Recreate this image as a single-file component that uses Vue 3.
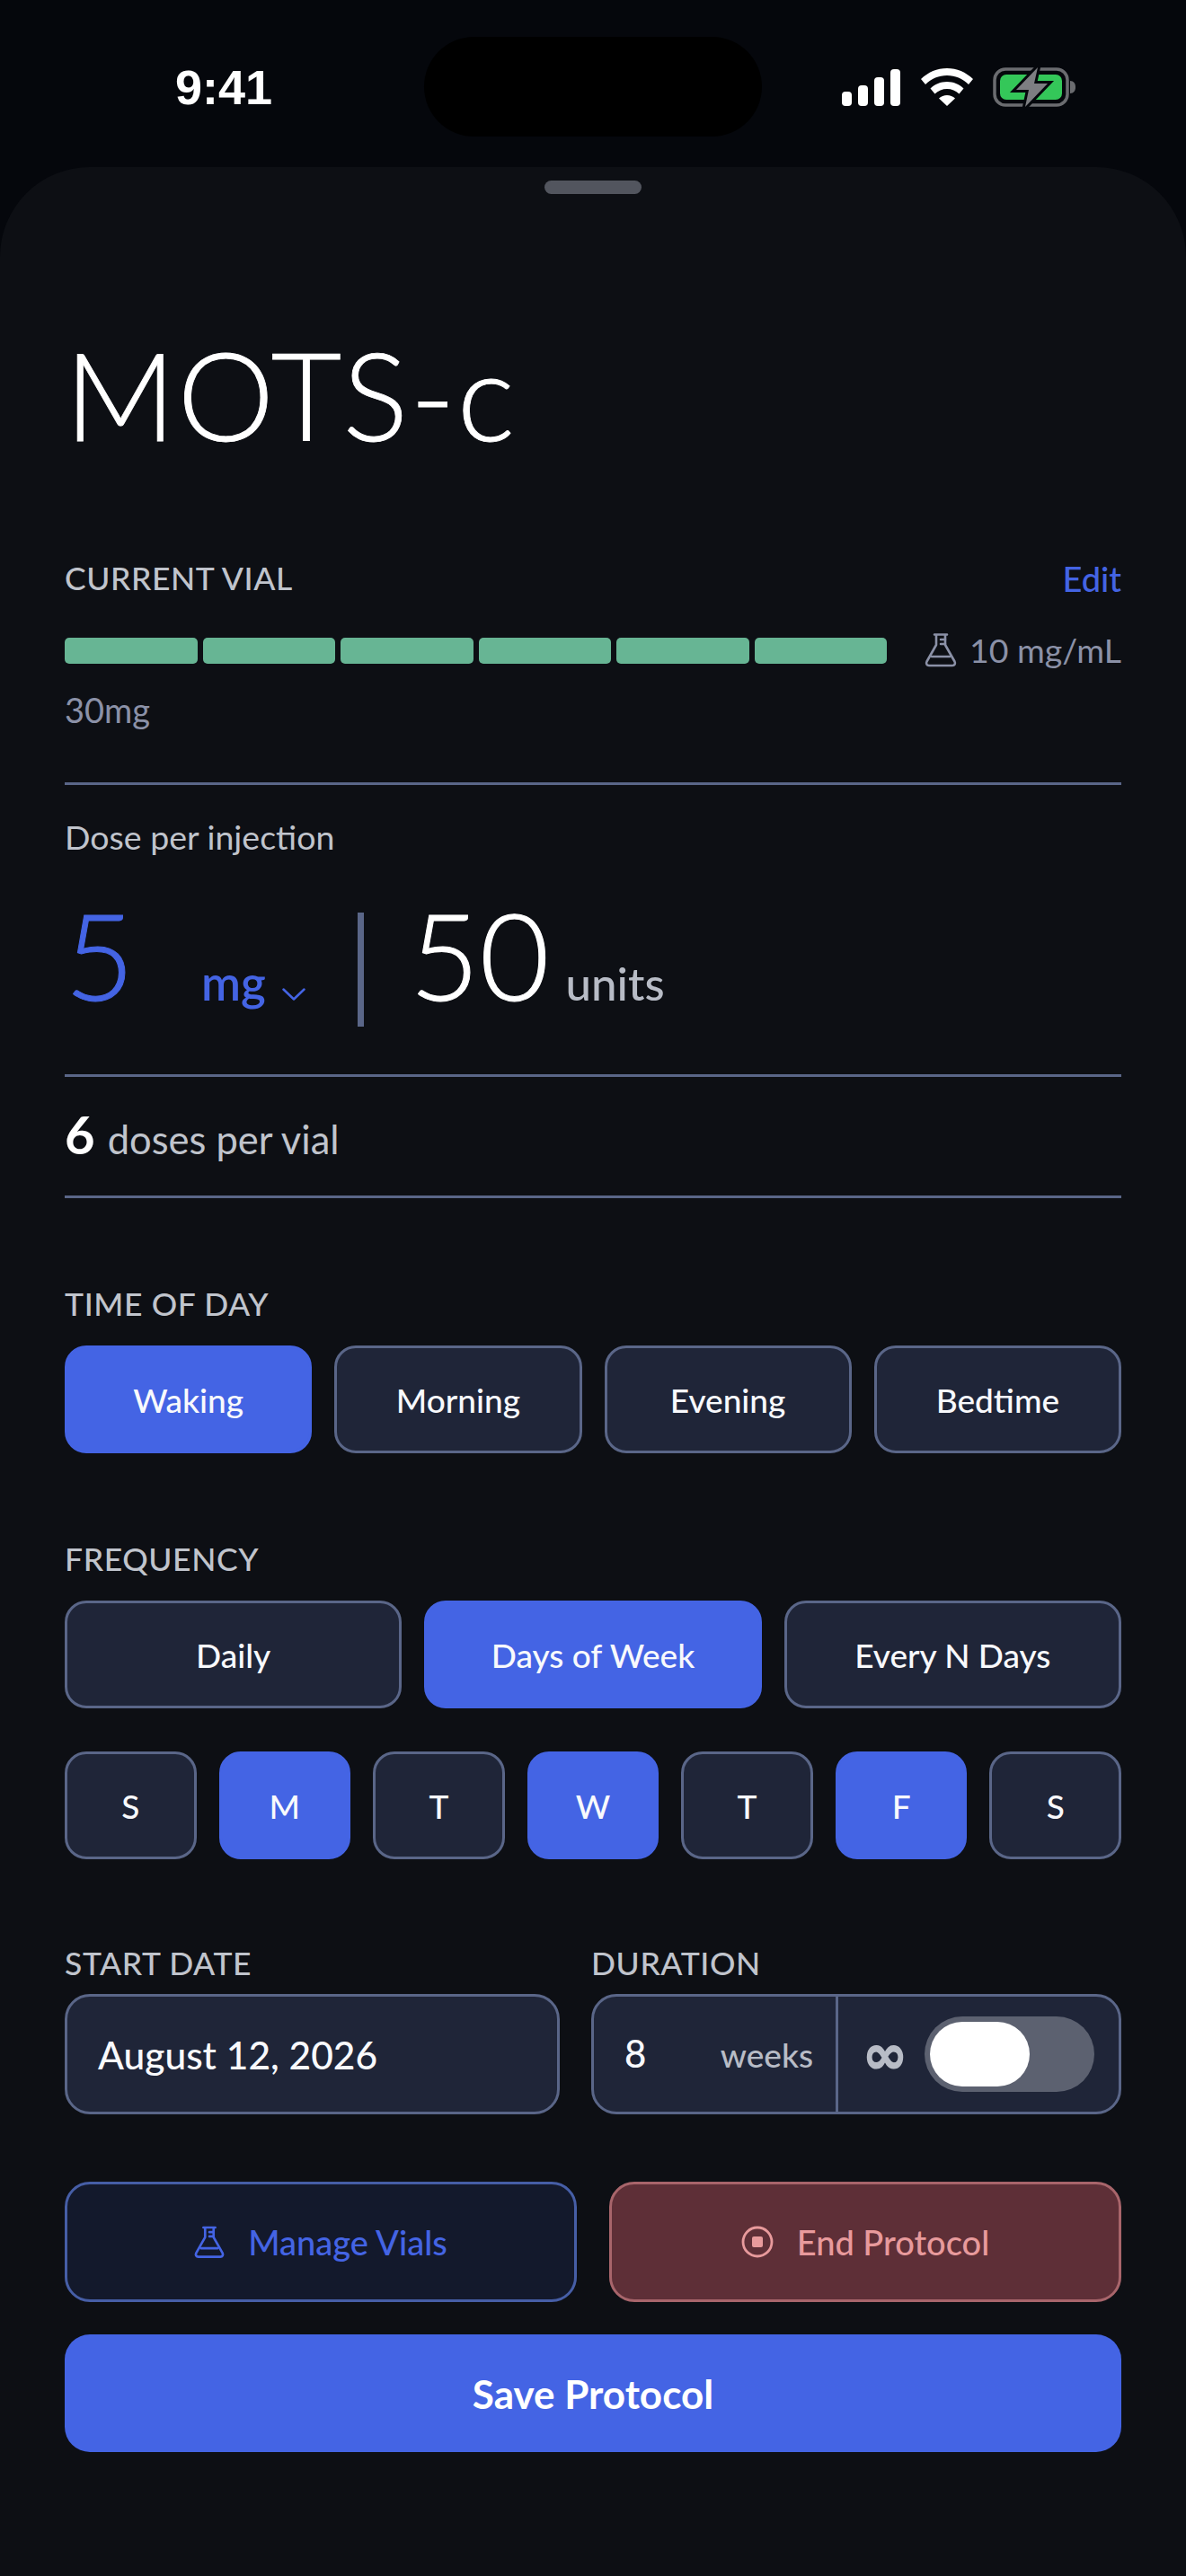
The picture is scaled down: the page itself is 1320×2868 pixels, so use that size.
<template>
  <div class="screen">
    <div class="status">
      <span class="time">9:41</span>
      <div class="island"></div>
      <div class="status-icons">
        <svg width="66" height="41" viewBox="0 0 66 41" fill="#fff">
          <rect x="0" y="25" width="11" height="16" rx="4" />
          <rect x="18" y="18" width="11" height="23" rx="4" />
          <rect x="36" y="9" width="11" height="32" rx="4" />
          <rect x="54" y="0" width="11" height="41" rx="4" />
        </svg>
        <svg width="58" height="42" viewBox="0 0 58 42" fill="#fff">
          <path d="M29 0C18 0 8 4.300 0 12l5 6c6.500-6.500 15-10 24-10s17.500 3.500 24 10l5-6C50 4.300 40 0 29 0z" />
          <path d="M29 15c-7 0-13.500 2.700-18.500 7.500l5 6C19 25 24 23 29 23s10 2 13.500 5.500l5-6C42.500 17.700 36 15 29 15z" />
          <path d="M29 30c-3.500 0-6.500 1.200-9 3.500L29 42l9-8.500c-2.500-2.300-5.500-3.500-9-3.500z" />
        </svg>
        <svg width="94" height="44" viewBox="0 0 94 44">
          <rect x="2" y="2" width="81" height="40" rx="12" fill="none" stroke="#6b6c70" stroke-width="3.500" />
          <rect x="8" y="8" width="69" height="28" rx="7" fill="#34c759" />
          <path d="M86 15c4 0 6 3 6 7s-2 7-6 7z" fill="#6b6c70" />
          <path d="M50 0 L26 25 H40 L36 44 L61 18 H46 Z" fill="#7d7e82" stroke="#05070c" stroke-width="6" paint-order="stroke" />
        </svg>
      </div>
    </div>

    <div class="sheet">
      <div class="handle"></div>
      <h1 class="title">MOTS-c</h1>

      <div class="row-between">
        <span class="label">CURRENT VIAL</span>
        <span class="edit">Edit</span>
      </div>
      <div class="vial-row">
        <div class="segments">
          <div v-for="n in 6" :key="n" class="segment"></div>
        </div>
        <div class="conc">
          <svg class="flask" width="36" height="38" viewBox="0 0 36 38" fill="none" stroke="currentColor" stroke-width="2.600" stroke-linecap="round" stroke-linejoin="round">
            <path d="M11 1.500h14M13 1.500V13L2.500 31.500c-1.200 2.300 0 4.500 2.500 4.500h26c2.500 0 3.700-2.200 2.500-4.500L23 13V1.500" />
            <path d="M8 26h20M18 7h5M18 12h5" />
          </svg>
          <span>10 mg/mL</span>
        </div>
      </div>
      <div class="total">30mg</div>
      <div class="rule rule-vial"></div>

      <div class="dose-label">Dose per injection</div>
      <div class="dose-row">
        <span class="big blue five">5</span>
        <span class="unit-select">mg
          <svg width="26" height="14" viewBox="0 0 26 14" fill="none" stroke="#4464e4" stroke-width="2.500" stroke-linecap="round" stroke-linejoin="round"><path d="M1.500 1.500 13 12.500 24.500 1.500" /></svg>
        </span>
        <div class="vbar"></div>
        <span class="big">50</span>
        <span class="units">units</span>
      </div>
      <div class="rule rule-dose"></div>
      <div class="per-vial"><b>6</b> doses per vial</div>
      <div class="rule"></div>

      <div class="label section-time">TIME OF DAY</div>
      <div class="pills four">
        <button v-for="t in times" :key="t" class="pill" :class="{ active: t === 'Waking' }">{{ t }}</button>
      </div>

      <div class="label section-freq">FREQUENCY</div>
      <div class="pills three">
        <button v-for="f in freqs" :key="f" class="pill" :class="{ active: f === 'Days of Week' }">{{ f }}</button>
      </div>
      <div class="pills seven">
        <button v-for="(d, i) in days" :key="i" class="pill day" :class="{ active: i === 1 || i === 3 || i === 5 }">{{ d }}</button>
      </div>

      <div class="date-grid">
        <div>
          <div class="label field-label">START DATE</div>
          <div class="field date">August 12, 2026</div>
        </div>
        <div>
          <div class="label field-label">DURATION</div>
          <div class="field duration">
            <div class="weeks"><span class="num">8</span><span class="wk">weeks</span></div>
            <div class="forever">
              <span class="inf">∞</span>
              <div class="toggle"><div class="knob"></div></div>
            </div>
          </div>
        </div>
      </div>

      <div class="actions">
        <button class="action manage">
          <svg width="34" height="37" viewBox="0 0 36 38" fill="none" stroke="currentColor" stroke-width="2.800" stroke-linecap="round" stroke-linejoin="round">
            <path d="M11 1.500h14M13 1.500V13L2.500 31.500c-1.200 2.300 0 4.500 2.500 4.500h26c2.500 0 3.700-2.200 2.500-4.500L23 13V1.500" />
            <path d="M8 26h20M18 7h5M18 12h5" />
          </svg>
          Manage Vials
        </button>
        <button class="action end">
          <svg width="36" height="36" viewBox="0 0 36 36" fill="none">
            <circle cx="18" cy="18" r="16" stroke="currentColor" stroke-width="2.800" />
            <rect x="12" y="12" width="12" height="12" rx="2" fill="currentColor" />
          </svg>
          End Protocol
        </button>
      </div>
      <button class="save">Save Protocol</button>
    </div>
  </div>
</template>

<script setup>
const times = ['Waking', 'Morning', 'Evening', 'Bedtime']
const freqs = ['Daily', 'Days of Week', 'Every N Days']
const days = ['S', 'M', 'T', 'W', 'T', 'F', 'S']
</script>

<style>
html,
body {
  background: #05070c;
}
</style>

<style scoped>
.screen {
  width: 1320px;
  height: 2868px;
  background: #05070c;
  font-family: Lato, "Open Sans", sans-serif;
  color: #f8f9fc;
  overflow: hidden;
}

.status {
  position: relative;
  height: 186px;
  box-sizing: border-box;
  padding: 0 121px 0 195px;
  display: flex;
  justify-content: space-between;
  align-items: flex-start;
}

.time {
  margin-top: 65px;
  font-family: "Liberation Sans", sans-serif;
  font-size: 54px;
  font-weight: 700;
  line-height: 64px;
  color: #fff;
}

.island {
  position: absolute;
  left: 472px;
  top: 41px;
  width: 376px;
  height: 111px;
  border-radius: 56px;
  background: #000;
}

.status-icons {
  margin-top: 75px;
  display: flex;
  align-items: center;
  gap: 22px;
}

.sheet {
  position: relative;
  height: 2682px;
  box-sizing: border-box;
  padding: 0 72px;
  background: #0d0f14;
  border-radius: 100px 100px 0 0;
}

.handle {
  position: absolute;
  left: 606px;
  top: 15px;
  width: 108px;
  height: 15px;
  border-radius: 8px;
  background: #52555e;
}

.title {
  margin: 0;
  padding-top: 173px;
  font-size: 136px;
  font-weight: 300;
  line-height: 160px;
  color: #fff;
  letter-spacing: 2px;
  -webkit-text-stroke: 0.800px #fff;
}

.label {
  font-size: 35.500px;
  font-weight: 500;
  line-height: 40px;
  letter-spacing: 0.6px;
  color: #c0c4cc;
}

.row-between {
  margin-top: 105px;
  display: flex;
  justify-content: space-between;
  align-items: center;
}

.edit {
  font-size: 38px;
  font-weight: 500;
  line-height: 40px;
  color: #4464e4;
}

.vial-row {
  margin-top: 39px;
  display: flex;
  align-items: center;
  justify-content: space-between;
  height: 42px;
}

.segments {
  display: flex;
  gap: 6px;
}

.segment {
  width: 147.500px;
  height: 29px;
  border-radius: 5px;
  background: #67b594;
}

.conc {
  display: flex;
  align-items: center;
  gap: 14px;
  font-size: 37.500px;
  line-height: 40px;
  color: #8b91a7;
}

.total {
  margin-top: 25px;
  font-size: 38px;
  line-height: 40px;
  color: #8b91a7;
}

.rule {
  height: 3px;
  background: #5a6688;
}

.rule-vial {
  margin-top: 61px;
}

.dose-label {
  margin-top: 38px;
  font-size: 37.500px;
  line-height: 40px;
  color: #c0c4cc;
}

.dose-row {
  margin-top: 46px;
  height: 130px;
  display: flex;
  align-items: baseline;
}

.big {
  font-size: 134px;
  font-weight: 300;
  line-height: 130px;
  color: #fff;
  -webkit-text-stroke: 1px currentColor;
}

.blue {
  color: #4464e4;
}

.five {
  width: 152px;
}

.unit-select {
  display: inline-flex;
  align-items: baseline;
  gap: 18px;
  font-size: 53px;
  font-weight: 600;
  color: #4464e4;
  width: 174px;
}

.vbar {
  align-self: flex-start;
  width: 7px;
  height: 127px;
  margin-top: 18px;
  background: #5a6688;
  margin-right: 51px;
}

.units {
  margin-left: 18px;
  font-size: 51px;
  font-weight: 500;
  color: #b8bcc6;
}

.rule-dose {
  margin-top: 68px;
}

.per-vial {
  height: 132px;
  display: flex;
  align-items: baseline;
  gap: 14px;
  padding-top: 29px;
  box-sizing: border-box;
  font-size: 43.500px;
  color: #c0c4cc;
}

.per-vial b {
  font-size: 58px;
  font-weight: 700;
  color: #fff;
}

.section-time {
  margin-top: 98px;
}

.section-freq {
  margin-top: 98px;
}

.pills {
  margin-top: 26px;
  display: grid;
  gap: 25px;
}

.four {
  grid-template-columns: repeat(4, 1fr);
}

.three {
  grid-template-columns: repeat(3, 1fr);
}

.seven {
  margin-top: 48px;
  grid-template-columns: repeat(7, 1fr);
}

.pill {
  height: 120px;
  box-sizing: border-box;
  border: 3px solid #5a6688;
  border-radius: 24px;
  background: #1f2538;
  color: #f8f9fc;
  font-family: inherit;
  font-size: 37px;
  font-weight: 500;
}

.pill.active {
  background: #4464e4;
  border-color: #4464e4;
}

.date-grid {
  margin-top: 96px;
  display: grid;
  grid-template-columns: 551px 590px;
  column-gap: 35px;
}

.field-label {
  margin-bottom: 14px;
}

.field {
  height: 134px;
  box-sizing: border-box;
  border: 3px solid #5a6688;
  border-radius: 28px;
  background: #1f2538;
  display: flex;
  align-items: center;
}

.date {
  padding-left: 34px;
  font-size: 42.500px;
  font-weight: 500;
}

.weeks {
  width: 272px;
  height: 100%;
  box-sizing: border-box;
  padding: 0 25px 0 34px;
  display: flex;
  align-items: baseline;
  justify-content: space-between;
  line-height: 126px;
  border-right: 3px solid #5a6688;
}

.num {
  font-size: 42px;
  font-weight: 500;
}

.wk {
  font-size: 37px;
  font-weight: 500;
  color: #b8bcc6;
}

.forever {
  flex: 1;
  display: flex;
  align-items: center;
  padding: 0 27px;
  justify-content: space-between;
}

.inf {
  font-family: "DejaVu Sans", sans-serif;
  font-size: 60px;
  font-weight: 700;
  color: #b8bcc6;
  -webkit-text-stroke: 1.500px #b8bcc6;
}

.toggle {
  width: 189px;
  height: 84px;
  box-sizing: border-box;
  padding: 6px;
  border-radius: 42px;
  background: #5c6170;
}

.knob {
  width: 111px;
  height: 72px;
  border-radius: 36px;
  background: #fff;
}

.actions {
  margin-top: 75px;
  display: grid;
  grid-template-columns: 1fr 1fr;
  gap: 36px;
}

.action {
  height: 134px;
  box-sizing: border-box;
  border-radius: 28px;
  border: 3px solid;
  font-family: inherit;
  font-size: 38px;
  font-weight: 500;
  display: flex;
  align-items: center;
  justify-content: center;
  gap: 26px;
}

.manage {
  background: #13192c;
  border-color: #465ea6;
  color: #4464e4;
}

.end {
  background: #5e2f37;
  border-color: #a8656b;
  color: #e89a9c;
}

.save {
  margin-top: 36px;
  width: 100%;
  height: 131px;
  border: 0;
  border-radius: 28px;
  background: #4464e4;
  color: #fff;
  font-family: inherit;
  font-size: 44px;
  font-weight: 700;
}
</style>
